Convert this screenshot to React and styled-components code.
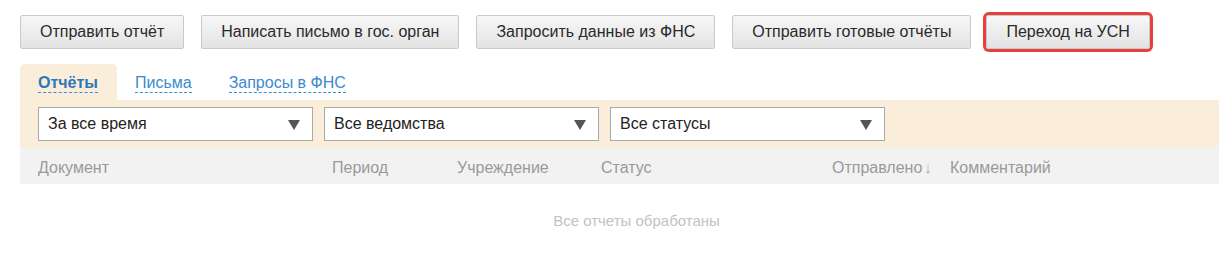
import React from "react";
import styled, { createGlobalStyle } from "styled-components";

const GlobalStyle = createGlobalStyle`
  body {
    margin: 0;
    background: #fff;
    font-family: "Liberation Sans", Arial, sans-serif;
  }
`;

const actions = [
  "Отправить отчёт",
  "Написать письмо в гос. орган",
  "Запросить данные из ФНС",
  "Отправить готовые отчёты",
  "Переход на УСН",
];

const tabs = ["Отчёты", "Письма", "Запросы в ФНС"];

const filters = ["За все время", "Все ведомства", "Все статусы"];

const columns = [
  { title: "Документ", width: 294 },
  { title: "Период", width: 125 },
  { title: "Учреждение", width: 144 },
  { title: "Статус", width: 231 },
  { title: "Отправлено", width: 118, sort: true },
  { title: "Комментарий", width: 150 },
];

const App = () => {
  return (
    <Page>
      <GlobalStyle />
      <Toolbar>
        {actions.map((label, i) => (
          <ActionButton key={label} $highlight={i === actions.length - 1}>
            {label}
          </ActionButton>
        ))}
      </Toolbar>

      <Tabs>
        {tabs.map((t, i) => (
          <Tab key={t} $active={i === 0}>
            <TabLabel $active={i === 0}>{t}</TabLabel>
          </Tab>
        ))}
      </Tabs>

      <FilterPanel>
        {filters.map((f) => (
          <Select key={f}>
            <span>{f}</span>
            <Caret />
          </Select>
        ))}
      </FilterPanel>

      <HeaderRow>
        {columns.map((c) => (
          <HeaderCell key={c.title} $width={c.width}>
            {c.title}
            {c.sort && <SortArrow>↓</SortArrow>}
          </HeaderCell>
        ))}
      </HeaderRow>

      <Empty>Все отчеты обработаны</Empty>
    </Page>
  );
};

const Page = styled.div`
  width: 1199px;
  padding: 15px 0 0 20px;
  height: 240px;
`;

const Toolbar = styled.div`
  display: flex;
  align-items: center;
  gap: 17px;
`;

const ActionButton = styled.button`
  height: 34px;
  padding: 0 19px;
  font-family: "Liberation Sans", Arial, sans-serif;
  font-size: 16px;
  color: #2a2a2a;
  background: linear-gradient(#f7f7f7, #e3e3e3);
  border: 1px solid #c9c9c9;
  border-radius: ${(p) => (p.$highlight ? "3px" : "2px")};
  box-shadow: ${(p) => (p.$highlight ? "0 0 0 3px #e5413a" : "none")};
  margin-left: ${(p) => (p.$highlight ? "-2px" : "0")};
  cursor: pointer;
`;

const Tabs = styled.div`
  display: flex;
  margin-top: 15px;
  height: 36px;
`;

const Tab = styled.div`
  display: flex;
  align-items: center;
  padding: 0 19px 0 18px;
  background: ${(p) => (p.$active ? "#faedd9" : "transparent")};
  border-radius: 5px 5px 0 0;
`;

const TabLabel = styled.span`
  font-size: 16px;
  line-height: 18px;
  margin-top: 2px;
  color: ${(p) => (p.$active ? "#2a77bb" : "#3b8ad0")};
  font-weight: ${(p) => (p.$active ? "bold" : "normal")};
  border-bottom: 1px dashed #3b8ad0;
`;

const FilterPanel = styled.div`
  display: flex;
  gap: 11px;
  padding: 7px 18px 0;
  height: 41px;
  background: #faedd9;
`;

const Select = styled.div`
  box-sizing: border-box;
  width: 275px;
  height: 34px;
  display: flex;
  align-items: center;
  justify-content: space-between;
  padding: 0 12px 0 9px;
  background: #fff;
  border: 1px solid #a9a9a9;
  font-size: 16px;
  color: #222;
`;

const Caret = styled.span`
  width: 0;
  height: 0;
  border-left: 6px solid transparent;
  border-right: 6px solid transparent;
  border-top: 10px solid #555;
  margin-top: 1px;
`;

const HeaderRow = styled.div`
  display: flex;
  align-items: center;
  box-sizing: border-box;
  height: 36px;
  padding: 3px 0 0 18px;
  background: #f2f2f2;
`;

const HeaderCell = styled.div`
  width: ${(p) => p.$width}px;
  font-size: 16px;
  color: #9a9a9a;
  white-space: nowrap;
`;

const SortArrow = styled.span`
  margin-left: 2px;
  font-size: 15px;
  color: #aaa;
`;

const Empty = styled.div`
  padding: 28px 0 0 34px;
  text-align: center;
  font-size: 15px;
  color: #c2c2c2;
`;

export default App;
